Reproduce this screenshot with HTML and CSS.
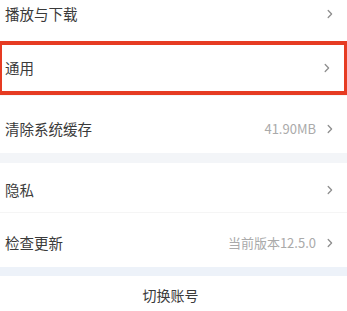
FILE: index.html
```html
<!DOCTYPE html>
<html lang="zh-CN">
<head>
<meta charset="utf-8">
<link rel="stylesheet" href="styles.css">
</head>
<body>
<div class="page">
  <div class="row row-first">
    <span class="title">播放与下载</span>
    <span class="right"><svg class="chev" viewBox="0 0 6 10" width="6" height="10"><polyline points="1.2,1.5 4.6,5 1.2,8.5" /></svg></span>
  </div>
  <div class="row row-hl">
    <span class="title">通用</span>
    <span class="right"><svg class="chev" viewBox="0 0 6 10" width="6" height="10"><polyline points="1.2,1.5 4.6,5 1.2,8.5" /></svg></span>
  </div>
  <div class="row row-cache">
    <span class="title">清除系统缓存</span>
    <span class="right"><span class="value">41.90MB</span><svg class="chev" viewBox="0 0 6 10" width="6" height="10"><polyline points="1.2,1.5 4.6,5 1.2,8.5" /></svg></span>
  </div>
  <div class="gap"></div>
  <div class="row row-privacy">
    <span class="title">隐私</span>
    <span class="right"><svg class="chev" viewBox="0 0 6 10" width="6" height="10"><polyline points="1.2,1.5 4.6,5 1.2,8.5" /></svg></span>
  </div>
  <div class="row row-update">
    <span class="title">检查更新</span>
    <span class="right"><span class="value">当前版本12.5.0</span><svg class="chev" viewBox="0 0 6 10" width="6" height="10"><polyline points="1.2,1.5 4.6,5 1.2,8.5" /></svg></span>
  </div>
  <div class="gap gap-blue"></div>
  <div class="switch">切换账号</div>
</div>
</body>
</html>
```
FILE: styles.css
```css
html, body {
  margin: 0;
  padding: 0;
  background: #ffffff;
}
.page {
  width: 347px;
  height: 311px;
  overflow: hidden;
  font-family: "Noto Sans CJK SC", "Noto Sans", sans-serif;
  color: #3a3a3a;
}
.row {
  display: flex;
  align-items: center;
  justify-content: space-between;
  box-sizing: border-box;
  padding: 0 14px 0 5px;
}
.title {
  font-size: 14.5px;
  line-height: 20px;
  letter-spacing: 0px;
}
.right {
  display: flex;
  align-items: center;
}
.value {
  font-size: 13px;
  color: #aaaaaa;
  margin-right: 11px;
  line-height: 18px;
}
.chev {
  display: block;
}
.chev polyline {
  fill: none;
  stroke: #8f8f8f;
  stroke-width: 1.3;
  stroke-linecap: round;
  stroke-linejoin: round;
}
.row-first {
  height: 54px;
  margin-top: -13px;
}
.row-hl {
  height: 54px;
  margin: 0 0 0 -2px;
  width: 350px;
  border: 4px solid #e63b22;
  padding-left: 3px;
  padding-right: 14px;
}
.row-cache {
  height: 58px;
  padding-top: 9px;
  border-top: 1px solid #f6f6f6;
}
.gap {
  height: 10px;
  background: #f3f5f8;
}
.gap-blue {
  height: 9px;
  background: #edf2f9;
}
.row-privacy {
  height: 50px;
  padding-top: 4px;
  border-bottom: 1px solid #f5f5f5;
}
.row-update {
  height: 54px;
  padding-top: 6px;
}
.switch {
  height: 35px;
  display: flex;
  align-items: center;
  justify-content: center;
  font-size: 14px;
  color: #3a3a3a;
  padding-right: 6px;
  padding-top: 1px;
}
```
